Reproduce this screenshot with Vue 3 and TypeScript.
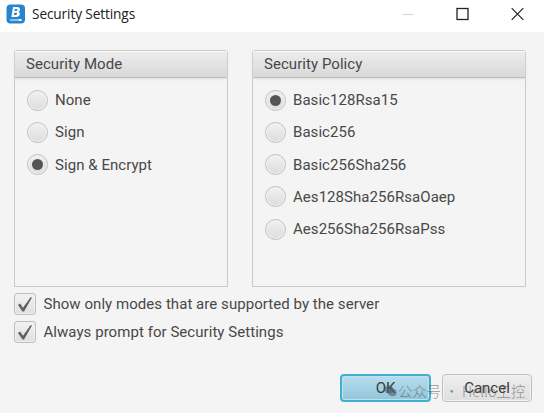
<script setup lang="ts">
import { ref } from 'vue'

const modes = ['None', 'Sign', 'Sign & Encrypt']
const policies = ['Basic128Rsa15', 'Basic256', 'Basic256Sha256', 'Aes128Sha256RsaOaep', 'Aes256Sha256RsaPss']
const mode = ref('Sign & Encrypt')
const policy = ref('Basic128Rsa15')
const supportedOnly = ref(true)
const alwaysPrompt = ref(true)
</script>

<template>
  <div class="window">
    <header class="titlebar">
      <svg class="logo" width="20" height="20" viewBox="0 0 20 20">
        <rect x="0.5" y="0.5" width="18.5" height="19" rx="4" fill="#2785cf" />
        <path fill="#fff" fill-rule="evenodd" d="M7 3h4.2c3.5 0 3.6 3.8 1.2 4.8 2.5 1 1.7 5.2-2 5.2H5.4zM8.9 5.1l-.4 2h1.7c1.5 0 1.8-2 .3-2zM8.2 8.8l-.4 2.2h2c1.7 0 2-2.2.3-2.2z" />
        <path d="M4 16h9" stroke="#b9dcf5" stroke-width="1.4" />
        <path d="M13 16h2.5" stroke="#fff" stroke-width="2" />
      </svg>
      <span class="title">Security Settings</span>
      <div class="controls">
        <svg width="12" height="14" viewBox="0 0 12 14"><path d="M0 7.5h12" stroke="#d4d4d4" /></svg>
        <svg width="13" height="14" viewBox="0 0 13 14"><rect x="1" y="1.5" width="11" height="11" fill="none" stroke="#222" stroke-width="1.3" /></svg>
        <svg width="13" height="14" viewBox="0 0 13 14"><path d="M.7 1.2l11.6 11.6M12.3 1.2L.7 12.8" stroke="#222" stroke-width="1.2" /></svg>
      </div>
    </header>

    <main class="panels">
      <section class="panel">
        <h2>Security Mode</h2>
        <div class="options">
          <div v-for="m in modes" :key="m" class="option" @click="mode = m">
            <span class="radio"><i v-if="mode === m" /></span><span>{{ m }}</span>
          </div>
        </div>
      </section>
      <section class="panel">
        <h2>Security Policy</h2>
        <div class="options">
          <div v-for="p in policies" :key="p" class="option" @click="policy = p">
            <span class="radio"><i v-if="policy === p" /></span><span>{{ p }}</span>
          </div>
        </div>
      </section>
    </main>

    <div class="checks">
      <div class="check" @click="supportedOnly = !supportedOnly">
        <span class="box"><svg v-if="supportedOnly" width="16" height="17" viewBox="0 0 16 17"><path d="M1 9l2.1-1.5L6 11.8 13.5 1.3 15 1.5 7 15.5H5.5z" fill="#606060" /></svg></span>
        <span>Show only modes that are supported by the server</span>
      </div>
      <div class="check" @click="alwaysPrompt = !alwaysPrompt">
        <span class="box"><svg v-if="alwaysPrompt" width="16" height="17" viewBox="0 0 16 17"><path d="M1 9l2.1-1.5L6 11.8 13.5 1.3 15 1.5 7 15.5H5.5z" fill="#606060" /></svg></span>
        <span>Always prompt for Security Settings</span>
      </div>
    </div>

    <footer class="actions">
      <button class="ok">OK</button>
      <button>Cancel</button>
    </footer>
    <div class="watermark">
      <svg width="13" height="12" viewBox="0 0 13 12"><ellipse cx="5" cy="4.5" rx="4.5" ry="4" /><ellipse cx="8.5" cy="7.5" rx="4.2" ry="3.8" /></svg>
      <span>公众号 · Hello工控</span>
    </div>
  </div>
</template>

<style>
body { margin: 0; overflow: hidden; }
</style>

<style scoped>
.window {
  position: relative;
  box-sizing: border-box;
  width: 544px;
  height: 413px;
  background: #f4f4f4;
  color: #484848;
  font: 15px/20px Roboto, sans-serif;
  letter-spacing: 0.05px;
}
.titlebar {
  box-sizing: border-box;
  display: flex;
  align-items: center;
  height: 32px;
  padding: 0 20px 5px 6px;
  background: #fff;
}
.title {
  margin-left: 6px;
  padding-top: 1px;
  font: 13.7px/20px "Open Sans", sans-serif;
  letter-spacing: -0.13px;
  color: #222;
}
.controls { display: flex; gap: 42px; margin-left: auto; }
.controls svg { display: block; }
.panels {
  display: grid;
  grid-template-columns: 214px 274px;
  gap: 24px;
  padding: 18px 18px 0 14px;
}
.panel {
  box-sizing: border-box;
  height: 237px;
  border: 1px solid #c8c8c8;
  border-radius: 3px 3px 0 0;
}
h2 {
  box-sizing: border-box;
  height: 27px;
  margin: 0;
  padding: 3px 11px;
  border-bottom: 1px solid #bdbdbd;
  border-radius: 2px 2px 0 0;
  background: linear-gradient(#ededed, #d9d9d9);
  box-shadow: inset 0 1px #fafafa, 0 1px 3px #dedede;
  font: inherit;
}
.options { display: grid; gap: 11.3px; padding: 11.5px 12px 0; }
.option { display: flex; align-items: center; gap: 7px; height: 21px; }
.radio {
  box-sizing: border-box;
  display: grid;
  place-items: center;
  width: 21px;
  height: 21px;
  border: 1px solid #c0c0c0;
  border-radius: 50%;
  background: linear-gradient(#f1f1f1, #dcdcdc);
  box-shadow: inset 0 0 0 1px #f2f2f2;
}
.radio i { width: 11px; height: 11px; border-radius: 50%; background: #555; }
.checks { display: grid; gap: 6px; padding: 6px 14px 0; }
.check { display: flex; align-items: center; gap: 7.5px; height: 22px; }
.box {
  box-sizing: border-box;
  display: grid;
  place-items: center;
  width: 22px;
  height: 22px;
  border: 1px solid #bebebe;
  border-radius: 3px;
  background: linear-gradient(#f3f3f3, #dedede);
  box-shadow: inset 0 0 0 1px #f0f0f0;
}
.actions { display: flex; justify-content: flex-end; gap: 11px; padding: 31px 12px 0 0; }
button {
  box-sizing: border-box;
  width: 90px;
  height: 28px;
  padding: 0;
  border: 1px solid #bebebe;
  border-radius: 4px;
  background: linear-gradient(#efefef, #dedede);
  box-shadow: inset 0 0 0 1px #f3f3f3;
  color: #3b3b3b;
  font: 15px/20px Roboto, sans-serif;
}
.ok {
  width: 91px;
  border: 2px solid #43afd0;
  background: linear-gradient(#b8deee, #91c5dc);
  box-shadow: inset 0 0 0 1px #c0e2ef;
}
/* Stamp laid over the buttons */
.watermark {
  position: absolute;
  left: 384px;
  top: 381px;
  display: flex;
  gap: 1px;
  align-items: center;
  color: rgba(90, 90, 90, 0.65);
  font: 14.3px/20px "Noto Sans CJK SC", sans-serif;
  font-weight: 300;
  letter-spacing: 0.1px;
  white-space: pre;
  pointer-events: none;
}
.watermark svg { fill: rgba(75, 95, 105, 0.6); }
</style>
